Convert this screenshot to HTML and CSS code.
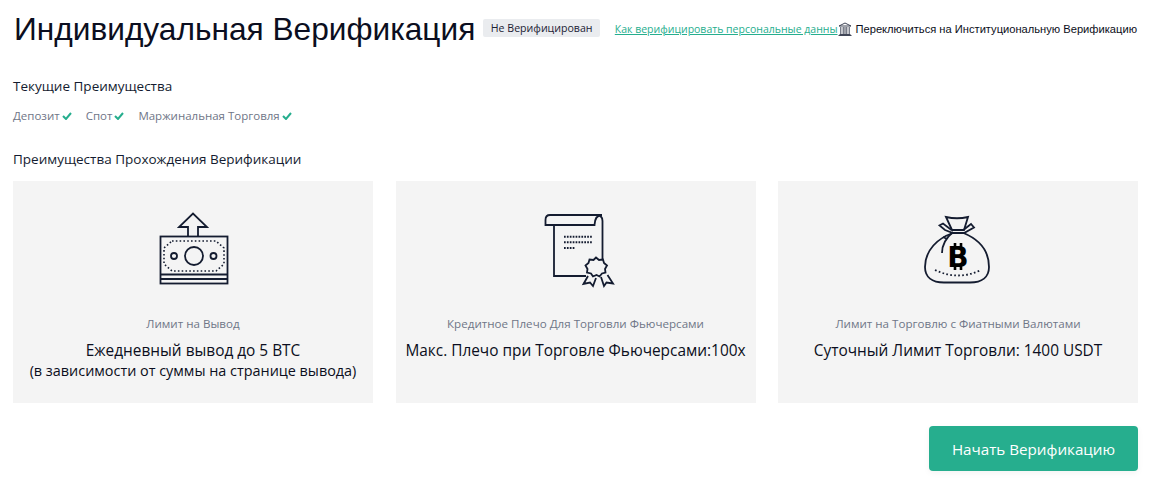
FILE: index.html
```html
<!DOCTYPE html>
<html lang="ru">
<head>
<meta charset="utf-8">
<title>Индивидуальная Верификация</title>
<link rel="stylesheet" href="styles.css">
</head>
<body>
<main class="page">
  <header class="head">
    <h1 class="title">Индивидуальная Верификация</h1>
    <span class="badge">Не Верифицирован</span>
    <div class="head-links">
      <a class="how" href="#">Как верифицировать персональные данны</a>
      <a class="switch" href="#">
        <svg class="bank" viewBox="0 0 14 14" width="14" height="14" fill="none" stroke="#2a3144" stroke-width=".9">
          <path d="M1 4 7 1l6 3zM1.500 12.500h11M.5 13.500h13M2.800 5v7M5.200 5v7M7 5v7M8.800 5v7M11.200 5v7"/>
        </svg>
        <span>Переключиться на Институциональную Верификацию</span>
      </a>
    </div>
  </header>

  <h2 class="section current">Текущие Преимущества</h2>
  <ul class="perks">
    <li class="perk">Депозит<svg class="tick" viewBox="0 0 10 8" width="10" height="8"><path d="M1 4l3 3 5-6" fill="none" stroke="#26ae8e" stroke-width="2"/></svg></li>
    <li class="perk">Спот<svg class="tick" viewBox="0 0 10 8" width="10" height="8"><path d="M1 4l3 3 5-6" fill="none" stroke="#26ae8e" stroke-width="2"/></svg></li>
    <li class="perk">Маржинальная Торговля<svg class="tick" viewBox="0 0 10 8" width="10" height="8"><path d="M1 4l3 3 5-6" fill="none" stroke="#26ae8e" stroke-width="2"/></svg></li>
  </ul>

  <h2 class="section benefits">Преимущества Прохождения Верификации</h2>
  <section class="cards">
    <article class="card">
      <svg class="icon" viewBox="0 0 80 80" width="80" height="80" fill="none" stroke="#141c30" stroke-width="1.8">
        <path d="M35 26V17H26L40 3.500 54 17H45v9"/>
        <rect x="7.500" y="26.500" width="67" height="47"/>
        <path d="M7.500 64.500h67M7.500 69h67"/>
        <circle cx="41" cy="46" r="9"/>
        <circle cx="21" cy="46" r="3"/>
        <circle cx="60.500" cy="46" r="3"/>
        <path stroke-width="1.600" stroke-dasharray="1.600 2.200" d="M19 31H63L71 38V54L63 61H19L11 54V38z"/>
      </svg>
      <p class="label">Лимит на Вывод</p>
      <p class="value">Ежедневный вывод до 5 BTC</p>
      <p class="note">(в зависимости от суммы на странице вывода)</p>
    </article>
    <article class="card">
      <svg class="icon" viewBox="0 0 80 80" width="80" height="80" fill="none" stroke="#141c30" stroke-width="1.8">
        <path d="M18 15V66H50"/>
        <path d="M18 15H9.500V10Q9.500 5 14 5H66Q59 5 58.500 15H18"/>
        <path d="M60 5Q66.500 5 66.500 11V49"/>
        <path stroke-width="2" stroke-dasharray="1.700 1.200" d="M28 26.700H57M28 32.300H57M28 38H39"/>
        <path d="M60 47.500l3 2.500 4-.5 1 3.500 3 2.500-2 3.500.5 3.500-3.500 1-2.500 3-3-1.500-3.500 1.500-2-3-4-1 .5-3.500-2-3.500 3-2.500 1-3.500 4 .5z"/>
        <path d="M52 66 47.500 74 54 72.500 57 76 60 68M65 67 68 76 70.500 72.500 77 73.500 71.500 65"/>
      </svg>
      <p class="label">Кредитное Плечо Для Торговли Фьючерсами</p>
      <p class="value">Макс. Плечо при Торговле Фьючерсами:100x</p>
    </article>
    <article class="card">
      <svg class="icon" viewBox="0 0 80 80" width="80" height="80" fill="none" stroke="#141c30" stroke-width="1.8">
        <path d="M28 7Q39 9.500 50 7L46 20H34z"/>
        <path d="M33.500 20 25 13.500 21.500 15.500 27 20 35 23H46L56 17.500 53 14 46 19.500"/>
        <path d="M35 23C20 28 7 40 7 57 7 67 14 72.500 26 72.500H52C64 72.500 71 67 71 57 71 40 60 29 45.500 23"/>
        <path d="M35 22C29 27 24 33 24 43M29 29 25 27"/>
        <path stroke-width="1.800" stroke-dasharray="1.700 2.300" d="M17 60Q40 71 63 60"/>
        <text class="btc" x="40" y="57" text-anchor="middle">B</text>
        <path stroke="#000" stroke-width="2.600" d="M37 33v4M43 33v4M37 56v4M43 56v4"/>
      </svg>
      <p class="label">Лимит на Торговлю с Фиатными Валютами</p>
      <p class="value">Суточный Лимит Торговли: 1400 USDT</p>
    </article>
  </section>
  <div class="actions">
    <button class="start" type="button">Начать Верификацию</button>
  </div>
</main>
</body>
</html>
```

FILE: styles.css
```css
* { box-sizing: border-box; }
html, body { margin: 0; background: #fff; }
body {
  font-family: "Open Sans", "Noto Sans", sans-serif;
  color: #141c30;
  height: 504px;
  overflow: hidden;
}
.page { padding: 0 22px 0 13px; }
.head {
  display: flex;
  align-items: center;
  height: 57px;
}
.title {
  margin: 0 8px 0 1px;
  font: 400 31.66px/40px "Liberation Sans", Arial, sans-serif;
  color: #0b0e20;
  white-space: nowrap;
}
.badge {
  height: 18px;
  margin-bottom: 1px;
  padding: 0 7.5px;
  background: #eaecef;
  border-radius: 2px;
  font-size: 10.6px;
  line-height: 18px;
  color: #1a2133;
  white-space: nowrap;
}
.head-links {
  margin-left: auto;
  display: flex;
  align-items: center;
}
.how {
  font-size: 10.5px;
  line-height: 16px;
  color: #26ae8e;
  text-decoration: underline;
  white-space: nowrap;
}
.switch {
  display: flex;
  align-items: center;
  gap: 4px;
  font: 400 11.15px/16px "Liberation Sans", Arial, sans-serif;
  color: #0b0e20;
  text-decoration: none;
  white-space: nowrap;
}
.section {
  margin: 0;
  font-size: 13.5px;
  font-weight: 400;
  line-height: 18px;
  color: #141c30;
}
.current { margin-top: 20px; }
.perks {
  display: flex;
  gap: 14px;
  margin: 13px 0 0;
  padding: 0;
  list-style: none;
}
.perk {
  display: flex;
  align-items: center;
  gap: 2px;
  font-size: 11.5px;
  line-height: 16px;
  color: #6f7687;
}
.benefits { margin-top: 26px; }
.cards {
  display: grid;
  grid-template-columns: repeat(3, 360px);
  column-gap: 22.5px;
  margin-top: 13px;
}
.card {
  height: 222px;
  padding-top: 29px;
  background: #f4f4f4;
  text-align: center;
}
.icon { display: block; margin: 0 auto; }
.btc {
  font: 700 28px "DejaVu Sans", sans-serif;
  fill: #000;
  stroke: none;
}
.label {
  margin: 26px 0 0;
  font-size: 11.6px;
  line-height: 16px;
  color: #6f7687;
}
.value {
  margin: 9px 0 0;
  font-size: 15.4px;
  line-height: 20px;
  color: #0b0e20;
}
.note {
  margin: 0;
  font-size: 14.4px;
  line-height: 19px;
  color: #0b0e20;
}
.actions {
  display: flex;
  justify-content: flex-end;
  margin: 23px -1px 0 0;
}
.start {
  width: 209px;
  height: 45px;
  border: 0;
  border-radius: 4px;
  background: #26ae8e;
  color: #fff;
  font: 400 15.2px "Open Sans", sans-serif;
  box-shadow: 0 2px 6px rgba(0,0,0,.05);
}
```
